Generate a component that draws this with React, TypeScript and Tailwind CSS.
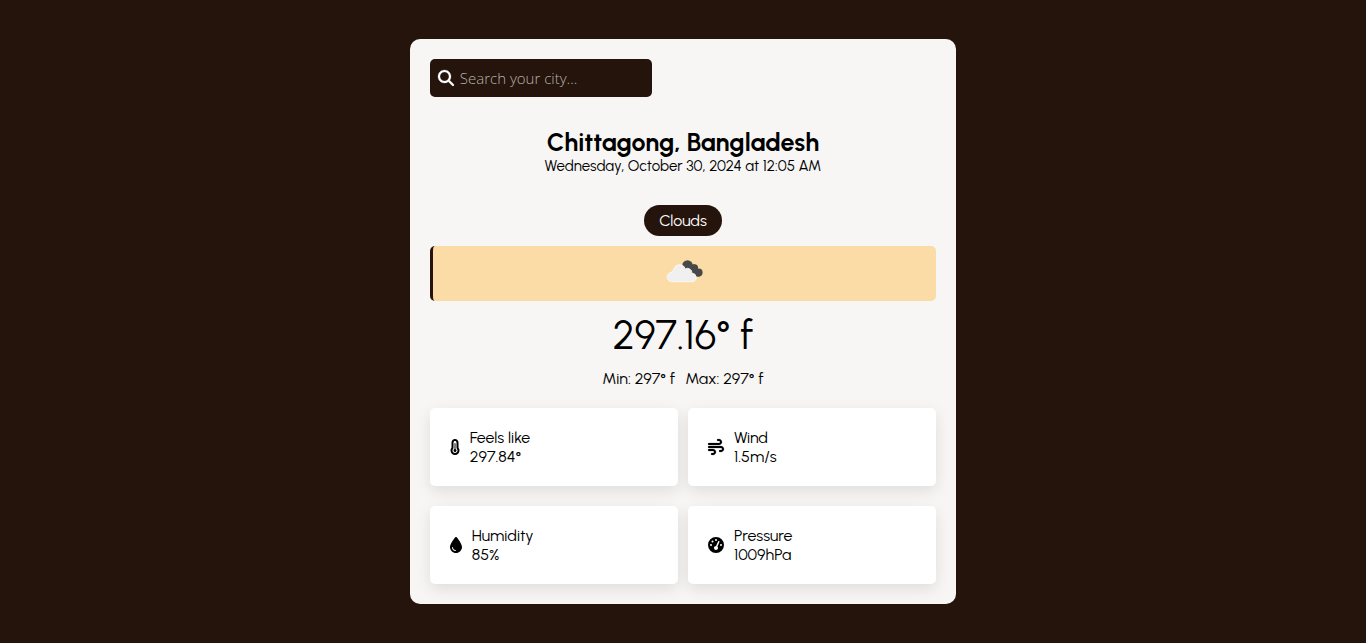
import type { ReactNode } from "react";
import { FaDroplet, FaGaugeHigh, FaMagnifyingGlass, FaTemperatureThreeQuarters, FaWind } from "react-icons/fa6";

function CloudIcon() {
  return (
    <svg viewBox="-8 -11 50 50" className="size-[50px]" role="img" aria-label="Broken clouds">
      <g fill="#484849">
        <circle cx="20.5" cy="5.5" r="5.3" />
        <circle cx="27.6" cy="7.7" r="3.5" />
        <circle cx="31.6" cy="12.500" r="4" />
        <path d="M20 4.500h8l5 12h-7z" />
      </g>
      <path
        d="M5 21.700a4.700 4.700 0 0 1-.3-9.400a3.500 3.500 0 0 1 2-2.300a5.900 5.900 0 0 1 11.500-1.100a4.600 4.600 0 0 1 6.800 4.300a4.300 4.300 0 0 1 .8 8.500z"
        fill="#f0f0f0"
        stroke="#fafafa"
        strokeWidth="0.8"
        strokeLinejoin="round"
      />
    </svg>
  );
}

function Metric({ icon, label, value }: { icon: ReactNode; label: string; value: string }) {
  return (
    <div className="flex items-center gap-2.5 rounded-[5px] bg-white p-5 shadow-[0_5px_15px_rgba(0,0,0,0.1)]">
      {icon}
      <div>
        <p>{label}</p>
        <p>{value}</p>
      </div>
    </div>
  );
}

export default function App() {
  return (
    <main className="flex min-h-screen items-center justify-center bg-[#24140b] font-['Urbanist','Lato',sans-serif] text-base leading-[19px] text-black">
      <section className="w-2/5 rounded-[10px] bg-[#f7f6f4] p-5">
        <div className="flex h-[38px] w-[222px] items-center gap-1.5 rounded-[5px] bg-[#24140b] px-2 text-white">
          <label htmlFor="city" aria-label="Search your city">
            <FaMagnifyingGlass className="size-4 shrink-0 overflow-visible stroke-current stroke-[8px]" aria-hidden="true" />
          </label>
          <input
            id="city"
            type="text"
            placeholder="Search your city..."
            className="h-full w-full min-w-0 bg-transparent font-['Open_Sans',sans-serif] text-[15px] leading-6 font-light outline-none placeholder:text-[#b8b2ad]"
          />
        </div>

        <header className="mt-[30px] text-center">
          <h1 className="text-[25px] leading-[30px] font-bold">Chittagong, Bangladesh</h1>
          <p className="text-[15px]">Wednesday, October 30, 2024 at 12:05 AM</p>
        </header>

        <div className="mt-[29px] flex flex-col items-center">
          <span className="rounded-[20px] bg-[#24140b] px-[15px] py-1.5 text-white">Clouds</span>
          <div className="mt-2.5 flex h-[55px] w-full items-center justify-center rounded-[5px] border-l-[3px] border-[#24140b] bg-[#fbdca6]">
            <CloudIcon />
          </div>
          <p className="mt-2.5 text-[40px] leading-[48px]">297.16° f</p>
          <div className="mt-2.5 flex gap-2.5">
            <p>Min: 297° f</p>
            <p>Max: 297° f</p>
          </div>
        </div>

        <div className="mt-5 grid grid-cols-2 gap-x-2.5 gap-y-5">
          <Metric icon={<FaTemperatureThreeQuarters className="h-4 w-2.5" />} label="Feels like" value="297.84°" />
          <Metric icon={<FaWind className="size-4 overflow-visible stroke-current stroke-[6px]" />} label="Wind" value="1.5m/s" />
          <Metric icon={<FaDroplet className="h-4 w-3" />} label="Humidity" value="85%" />
          <Metric icon={<FaGaugeHigh className="size-4" />} label="Pressure" value="1009hPa" />
        </div>
      </section>
    </main>
  );
}
